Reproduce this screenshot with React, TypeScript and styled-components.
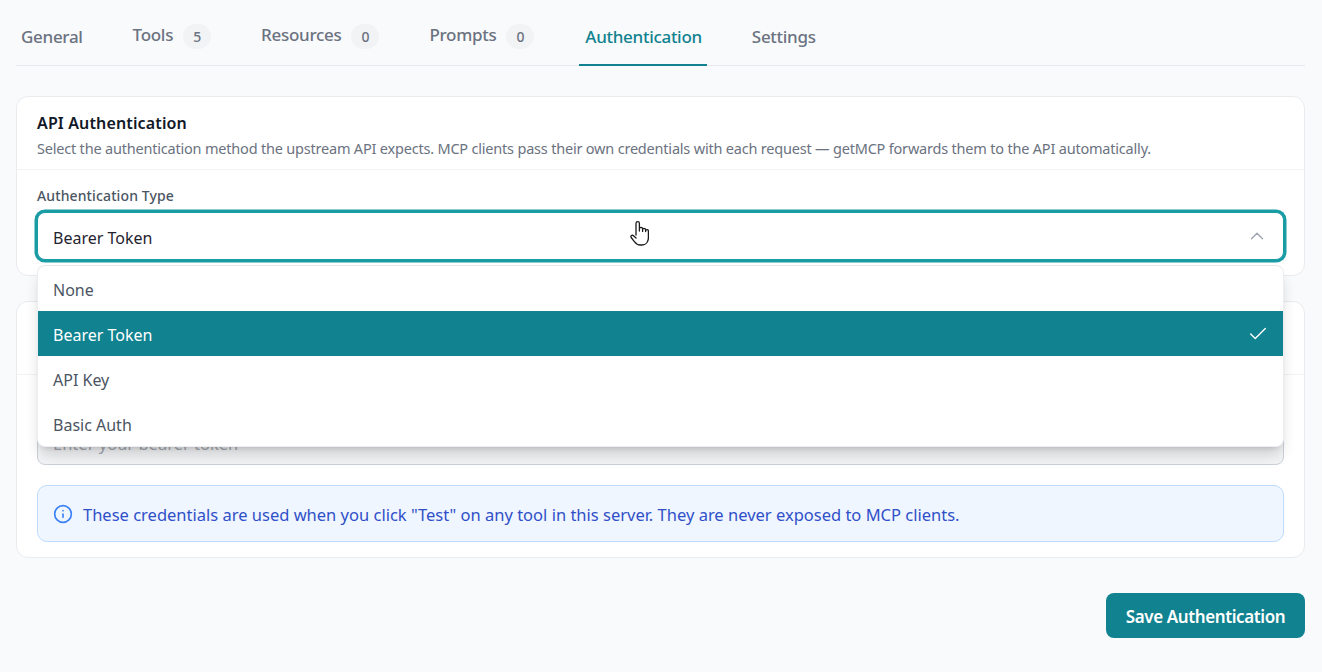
import React from 'react';
import styled, { createGlobalStyle } from 'styled-components';
import { Check, ChevronUp, Info } from 'lucide-react';

const TEAL = '#11828f';

const GlobalStyle = createGlobalStyle`
  html, body {
    margin: 0;
    padding: 0;
    background: #f9fafc;
  }
  body {
    font-family: "Noto Sans", "Open Sans", "Liberation Sans", sans-serif;
  }
  * {
    box-sizing: border-box;
  }
`;

const Page = styled.div`
  width: 1322px;
  height: 672px;
  padding: 0 17px 0 16px;
  overflow: hidden;
`;

const TabBar = styled.nav`
  display: flex;
  gap: 40px;
  height: 66px;
  border-bottom: 1px solid #e7e9ed;
  margin-bottom: 30px;
`;

const Tab = styled.div<{ $active?: boolean }>`
  display: flex;
  align-items: center;
  gap: 10px;
  height: 66px;
  padding: 8px 5px 0 ${(p) => (p.$active ? '6px' : '5px')};
  font-size: 17px;
  font-weight: 500;
  letter-spacing: -0.3px;
  color: ${(p) => (p.$active ? TEAL : '#6b7280')};
  border-bottom: 2px solid ${(p) => (p.$active ? TEAL : 'transparent')};
`;

const TabName = styled.span<{ $raised?: boolean }>`
  padding-bottom: ${(p) => (p.$raised ? '3px' : '0')};
`;

const Badge = styled.span`
  display: flex;
  align-items: center;
  justify-content: center;
  width: 28px;
  height: 25px;
  border-radius: 13px;
  background: #f2f3f5;
  color: #6b7280;
  font-size: 14px;
  font-weight: 500;
`;

const Card = styled.section`
  background: #fff;
  border: 1px solid #e9ebee;
  border-radius: 12px;
  margin-bottom: 25px;
`;

const CardHeader = styled.header`
  height: 73px;
  padding: 15px 20px 0;
  border-bottom: 1px solid #f1f2f4;
`;

const CardTitle = styled.h2`
  margin: 0;
  font-size: 16px;
  line-height: 22px;
  font-weight: 600;
  letter-spacing: 0.14px;
  color: #111827;
`;

const CardDescription = styled.p`
  margin: 4px 0 0;
  font-size: 14.5px;
  line-height: 20px;
  letter-spacing: -0.2px;
  color: #6b7280;
`;

const CardBody = styled.div`
  display: flex;
  flex-direction: column;
  padding: 16px 20px 15px;
`;

const Label = styled.label`
  display: block;
  font-size: 14px;
  line-height: 20px;
  font-weight: 500;
  letter-spacing: 0.12px;
  color: #4b5563;
  margin-bottom: 6px;
`;

const SelectWrap = styled.div`
  position: relative;
`;

const SelectBox = styled.div`
  display: flex;
  align-items: center;
  justify-content: space-between;
  height: 48px;
  padding: 0 15px 0 15px;
  border: 1px solid #1a9ca5;
  border-radius: 8px;
  box-shadow: 0 0 0 2.5px #1a9ca5;
  background: #fff;
  font-size: 16px;
  color: #1f2430;
`;

const SelectValue = styled.span`
  padding-top: 4px;
`;

const Chevron = styled(ChevronUp)`
  color: #9ca3af;
`;

const HandCursor = styled.svg`
  position: absolute;
  left: 593px;
  top: 9px;
  z-index: 20;
  fill: none;
  stroke: #1a1a1a;
  stroke-width: 1.3;
  stroke-linecap: round;
  stroke-linejoin: round;
`;

const Menu = styled.ul`
  position: absolute;
  z-index: 10;
  top: 53px;
  left: 0;
  right: 0;
  margin: 0;
  padding: 0;
  list-style: none;
  background: #fff;
  border: 1px solid #eceef1;
  border-top-color: #e7e9ec;
  border-radius: 8px;
  overflow: hidden;
  box-shadow: 0 10px 15px -3px rgba(0, 0, 0, 0.16), 0 4px 6px -4px rgba(0, 0, 0, 0.16);
`;

const MenuItem = styled.li<{ $selected?: boolean }>`
  display: flex;
  align-items: center;
  justify-content: space-between;
  height: 45px;
  padding: 0 14px 0 15px;
  font-size: 16px;
  color: ${(p) => (p.$selected ? '#fff' : '#4b5563')};
  background: ${(p) => (p.$selected ? TEAL : 'transparent')};
`;

const MenuText = styled.span`
  padding-top: 2px;
`;

const TextInput = styled.input`
  width: 100%;
  height: 48px;
  margin-top: 26px;
  padding: 5px 15px 0;
  border: 1px solid #cdd1d8;
  border-radius: 8px;
  background: #f3f4f6;
  font: inherit;
  font-size: 16.5px;
  &::placeholder {
    color: #a3a8b0;
  }
`;

const InfoBox = styled.div`
  display: flex;
  align-items: center;
  gap: 10px;
  height: 57px;
  margin-top: 20px;
  padding: 0 15px;
  background: #eff6ff;
  border: 1px solid #bfdbfe;
  border-radius: 10px;
  font-size: 16.5px;
  color: #2f50c8;
`;

const InfoText = styled.span`
  padding-top: 2px;
`;

const InfoIcon = styled(Info)`
  color: #3b82f6;
  flex: none;
`;

const Footer = styled.footer`
  display: flex;
  justify-content: flex-end;
  margin-top: 35px;
`;

const SaveButton = styled.button`
  width: 199px;
  height: 45px;
  padding: 2px 0 0;
  border: 0;
  border-radius: 8px;
  background: ${TEAL};
  color: #fff;
  font: inherit;
  font-size: 17px;
  font-weight: 600;
  letter-spacing: -0.4px;
`;

const TABS = [
  { name: 'General' },
  { name: 'Tools', count: 5 },
  { name: 'Resources', count: 0 },
  { name: 'Prompts', count: 0 },
  { name: 'Authentication', active: true },
  { name: 'Settings' }
];

const AUTH_TYPES = ['None', 'Bearer Token', 'API Key', 'Basic Auth'];

function App() {
  const selected = 'Bearer Token';

  return (
    <Page>
      <GlobalStyle />
      <TabBar>
        {TABS.map((tab) => (
          <Tab key={tab.name} $active={tab.active}>
            <TabName $raised={tab.count !== undefined}>{tab.name}</TabName>
            {tab.count !== undefined && <Badge>{tab.count}</Badge>}
          </Tab>
        ))}
      </TabBar>

      <Card>
        <CardHeader>
          <CardTitle>API Authentication</CardTitle>
          <CardDescription>
            Select the authentication method the upstream API expects. MCP clients pass their own
            credentials with each request — getMCP forwards them to the API automatically.
          </CardDescription>
        </CardHeader>
        <CardBody>
          <Label>Authentication Type</Label>
          <SelectWrap>
            <SelectBox>
              <SelectValue>{selected}</SelectValue>
              <Chevron size={22} strokeWidth={1.5} />
            </SelectBox>
            <HandCursor width='19' height='25' viewBox='0 0 19 25'>
              <path d='M6 14V2.4a1.7 1.7 0 0 1 3.4 0V10M9.4 8a1.6 1.6 0 0 1 3.2 0v2.4M12.6 8.8a1.5 1.5 0 0 1 3 0v1.8M15.6 10a1.4 1.4 0 0 1 2.8 0v6.5c0 4.5-2.5 7.5-6.5 7.5h-1.5c-3 0-4.5-1.2-6-3.4L1.2 16.5c-1-1.6 1-3 2.3-1.8L6 17' />
            </HandCursor>
            <Menu>
              {AUTH_TYPES.map((type) => (
                <MenuItem key={type} $selected={type === selected}>
                  <MenuText>{type}</MenuText>
                  {type === selected && <Check size={22} strokeWidth={1.5} />}
                </MenuItem>
              ))}
            </Menu>
          </SelectWrap>
        </CardBody>
      </Card>

      <Card>
        <CardHeader />
        <CardBody>
          <TextInput placeholder='Enter your bearer token' />
          <InfoBox>
            <InfoIcon size={20} />
            <InfoText>
              These credentials are used when you click "Test" on any tool in this server. They are
              never exposed to MCP clients.
            </InfoText>
          </InfoBox>
        </CardBody>
      </Card>

      <Footer>
        <SaveButton>Save Authentication</SaveButton>
      </Footer>
    </Page>
  );
}

export default App;
